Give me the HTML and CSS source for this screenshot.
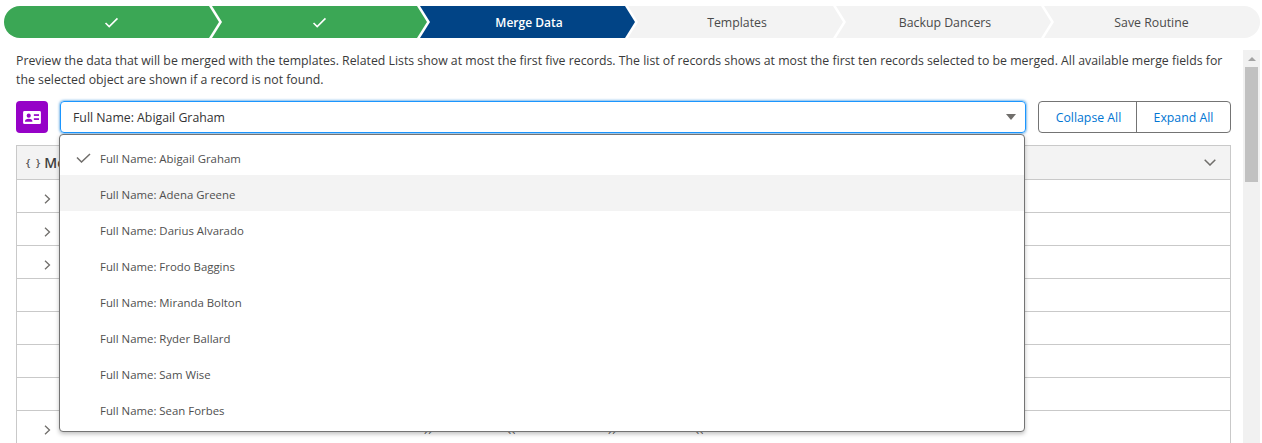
FILE: index.html
```html
<!DOCTYPE html>
<html lang="en">
<head>
<meta charset="utf-8">
<title>Merge Data</title>
<link rel="stylesheet" href="styles.css">
</head>
<body>
<nav class="path">
  <div class="stage done"><svg class="tick" viewBox="0 0 16 12"><path d="M1.500 6.500 5.500 10.500 14.500 1.500"/></svg></div>
  <div class="stage done"><svg class="tick" viewBox="0 0 16 12"><path d="M1.500 6.500 5.500 10.500 14.500 1.500"/></svg></div>
  <div class="stage current">Merge Data</div>
  <div class="stage">Templates</div>
  <div class="stage">Backup Dancers</div>
  <div class="stage last">Save Routine</div>
</nav>
<div class="body">
  <main class="content">
    <p class="intro">Preview the data that will be merged with the templates. Related Lists show at most the first five records. The list of records shows at most the first ten records selected to be merged. All available merge fields for the selected object are shown if a record is not found.</p>
    <div class="controls">
      <span class="badge"><svg viewBox="0 0 20 16"><path class="card" d="M2 1h16a1.500 1.500 0 0 1 1.500 1.500v11a1.500 1.500 0 0 1-1.500 1.500h-16a1.500 1.500 0 0 1-1.500-1.500v-11a1.500 1.500 0 0 1 1.500-1.500z"/><circle class="cut" cx="6.500" cy="6" r="2.200"/><path class="cut" d="M2.500 12.500c0-2.500 1.500-3.300 4-3.300s4 .8 4 3.300z"/><rect class="cut" x="12" y="4.500" width="5.500" height="1.800"/><rect class="cut" x="12" y="8.800" width="5.500" height="1.800"/></svg></span>
      <div class="picker">
        <div class="field"><span>Full Name: Abigail Graham</span><i class="caret"></i></div>
        <ul class="menu">
          <li><svg class="check" viewBox="0 0 15 10"><path d="M1 4.500 5.500 9 14 1"/></svg>Full Name: Abigail Graham</li>
          <li class="hover">Full Name: Adena Greene</li>
          <li>Full Name: Darius Alvarado</li>
          <li>Full Name: Frodo Baggins</li>
          <li>Full Name: Miranda Bolton</li>
          <li>Full Name: Ryder Ballard</li>
          <li>Full Name: Sam Wise</li>
          <li>Full Name: Sean Forbes</li>
        </ul>
      </div>
      <div class="btns"><button>Collapse All</button><button>Expand All</button></div>
    </div>
    <section class="table">
      <header class="thead"><span class="braces">{ }</span><b>Merge Fields</b><svg class="down" viewBox="0 0 12 7"><path d="M.7.7 6 6 11.300.7"/></svg></header>
      <div class="row"><svg class="more" viewBox="0 0 7 10"><path d="M1 .7 5.500 5 1 9.300"/></svg></div>
      <div class="row"><svg class="more" viewBox="0 0 7 10"><path d="M1 .7 5.500 5 1 9.300"/></svg></div>
      <div class="row"><svg class="more" viewBox="0 0 7 10"><path d="M1 .7 5.500 5 1 9.300"/></svg></div>
      <div class="row"></div>
      <div class="row"></div>
      <div class="row"></div>
      <div class="row"></div>
      <div class="row"><svg class="more" viewBox="0 0 7 10"><path d="M1 .7 5.500 5 1 9.300"/></svg>
        <div class="frags"><span>{{</span><span>}}</span><span>{{</span><span>}}</span></div>
      </div>
    </section>
  </main>
  <div class="scrollbar"><i class="up"></i><i class="thumb"></i></div>
</div>
</body>
</html>
```
FILE: styles.css
```css
* { box-sizing: border-box; }
html, body { margin: 0; height: 443px; overflow: hidden; background: #fff; }
body { font-family: "Open Sans", sans-serif; font-size: 12.3px; color: #3e3e3c; }

.path { display: flex; height: 32px; margin: 6px 2px 0 4px; border-radius: 16px; overflow: hidden; }
.stage { flex: 0 0 215px; margin-right: -7px; padding-left: 3px; display: flex; align-items: center; justify-content: center; background: #f3f3f3; color: #4a4a4a; clip-path: polygon(0 0, calc(100% - 10px) 0, 100% 50%, calc(100% - 10px) 100%, 0 100%, 10px 50%); }
.stage:first-child { clip-path: polygon(0 0, calc(100% - 10px) 0, 100% 50%, calc(100% - 10px) 100%, 0 100%); }
.stage.last { flex: 1 1 0; margin-right: 0; padding-right: 4px; clip-path: polygon(0 0, 100% 0, 100% 100%, 0 100%, 10px 50%); }
.done { background: #3ba755; }
.current { background: #014486; color: #fff; font-weight: 600; font-size: 12px; }
.tick { width: 15px; height: 11px; margin-left: -3px; fill: none; stroke: #fff; stroke-width: 1.700; }

.body { display: flex; height: 405px; margin-top: 12px; overflow: hidden; }
.content { width: 1231px; padding-left: 16px; flex: none; }
.intro { margin: 0; line-height: 19px; padding-top: 1px; width: 1214px; color: #3a3a3a; }
.controls { display: flex; align-items: flex-start; margin-top: 12px; }
.badge { width: 32px; height: 32px; border-radius: 4px; background: #9602c7; display: flex; align-items: center; justify-content: center; }
.badge svg { width: 20px; height: 15px; }
.card { fill: #fff; }
.cut { fill: #9602c7; }
.picker { position: relative; width: 966px; margin: 0 12px; }
.field { height: 32px; border: 1px solid #1b96ff; border-radius: 4px; box-shadow: 0 0 3px #0176d3; padding: 0 12px; display: flex; align-items: center; justify-content: space-between; color: #333; }
.caret { width: 0; height: 0; border: 5px solid transparent; border-top: 6px solid #706e6b; border-bottom: 0; margin-right: -3px; }
.menu { position: absolute; top: 33px; left: -1px; width: 966px; margin: 0; padding: 4px 0; list-style: none; background: #fff; border: 1px solid #747474; border-radius: 4px; box-shadow: 0 2px 4px rgba(0,0,0,.25); z-index: 2; }
.menu li { position: relative; height: 36px; padding: 2px 0 0 40px; display: flex; align-items: center; font-size: 11.4px; color: #4f4f4f; }
.menu li.hover { background: #f3f3f3; }
.check { position: absolute; left: 16px; top: 14px; width: 15px; height: 10px; fill: none; stroke: #706e6b; stroke-width: 1.500; }
.btns { display: flex; height: 32px; border: 1px solid #747474; border-radius: 4px; }
.btns button { font: inherit; color: #0176d3; background: none; border: 0; padding: 0 0 0 2px; width: 97px; }
.btns button + button { width: 94px; padding: 0; border-left: 1px solid #747474; }

.table { width: 1215px; margin-top: 12px; border: solid #c9c9c9; border-width: 1px 1px 0 1px; }
.thead { height: 34px; background: #f3f3f3; border-bottom: 1px solid #c9c9c9; display: flex; align-items: center; padding-left: 9px; }
.braces { font-size: 11px; font-weight: 600; margin-right: 4px; color: #555; word-spacing: 3px; }
.thead b { font-size: 14px; font-weight: 600; }
.down { margin-left: auto; margin-right: 14px; width: 12px; height: 7px; fill: none; stroke: #706e6b; stroke-width: 1.500; }
.row { position: relative; height: 33px; border-bottom: 1px solid #c9c9c9; display: flex; align-items: center; padding-left: 27px; }
.more { width: 7px; height: 10px; margin-top: 6px; fill: none; stroke: #706e6b; stroke-width: 1.300; }
.frags { position: absolute; left: 406px; top: 17px; height: 6px; overflow: hidden; display: grid; grid-template-columns: 85px 99px 89px auto; font-size: 11px; line-height: 15px; color: #555; }

.scrollbar { width: 17px; margin-left: 12px; background: #f1f1f1; display: flex; flex-direction: column; align-items: center; }
.up { width: 0; height: 0; margin: 7px 0 6px; border: 4px solid transparent; border-bottom: 4px solid #a3a3a3; border-top: 0; }
.thumb { width: 13px; height: 115px; background: #c1c1c1; }
```
